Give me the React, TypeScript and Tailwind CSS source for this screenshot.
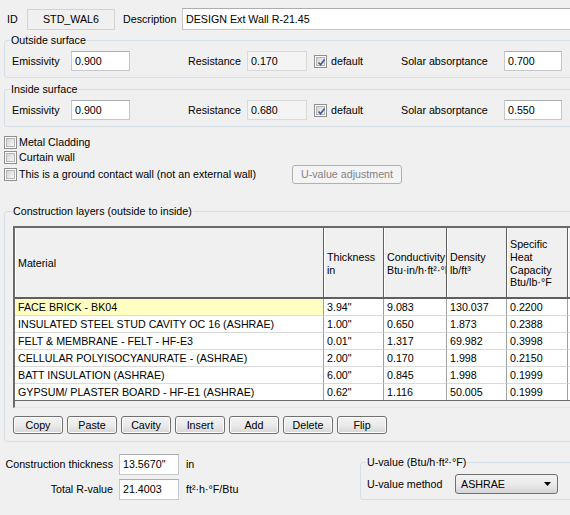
import React from "react";

const Check = ({ checked = false }: { checked?: boolean }) => (
  <div className="w-[13px] h-[13px] shrink-0 border border-[#8e8f8f] bg-white p-[1px]">
    <div className="w-full h-full bg-gradient-to-br from-[#d4d4d4] to-[#f7f7f7] border border-[#b5b5b5] relative">
      {checked && (
        <svg viewBox="0 0 9 9" className="absolute inset-0 w-[9px] h-[9px]">
          <path d="M1.5 4.5 L3.6 6.8 L7.6 1.6" fill="none" stroke="#3a57a0" strokeWidth="1.6" />
        </svg>
      )}
    </div>
  </div>
);

const Input = ({ w, children, disabled = false }: { w: string; children: React.ReactNode; disabled?: boolean }) => (
  <div
    className={
      "h-[20px] shrink-0 flex items-center pl-[3px] border whitespace-nowrap overflow-hidden " +
      w +
      (disabled ? " bg-[#f4f4f4] border-[#d9d9d9]" : " bg-white border-[#c6c8cd] border-t-[#abadb3]")
    }
  >
    {children}
  </div>
);

const Btn = ({ children }: { children: React.ReactNode }) => (
  <div className="w-[50px] h-[18px] shrink-0 flex items-center justify-center rounded-[3px] border border-[#707070] bg-gradient-to-b from-[#f2f2f2] via-[#ebebeb] to-[#d6d6d6] shadow-[inset_0_0_0_1px_#fcfcfc]">
    {children}
  </div>
);

const rows = [
  ["FACE BRICK - BK04", "3.94\"", "9.083", "130.037", "0.2200"],
  ["INSULATED STEEL STUD CAVITY OC 16 (ASHRAE)", "1.00\"", "0.650", "1.873", "0.2388"],
  ["FELT & MEMBRANE - FELT - HF-E3", "0.01\"", "1.317", "69.982", "0.3998"],
  ["CELLULAR POLYISOCYANURATE - (ASHRAE)", "2.00\"", "0.170", "1.998", "0.2150"],
  ["BATT INSULATION (ASHRAE)", "6.00\"", "0.845", "1.998", "0.1999"],
  ["GYPSUM/ PLASTER BOARD - HF-E1 (ASHRAE)", "0.62\"", "1.116", "50.005", "0.1999"],
];

const colW = ["w-[309px]", "w-[60px]", "w-[63px]", "w-[60px]", "w-[61px]", "w-[60px]"];

const SurfaceGroup = ({ title, res, solar, mt }: { title: string; res: string; solar: string; mt: string }) => (
  <fieldset className={"ml-[4px] w-[580px] shrink-0 border border-[#d5dfe5] rounded-[3px] pl-[7px] pb-[6px] " + mt}>
    <legend className="ml-[-2px] px-[1px] leading-[13px]">{title}</legend>
    <div className="flex items-center h-[20px] mt-[4px]">
      <span className="w-[59px] shrink-0">Emissivity</span>
      <Input w="w-[59px]">0.900</Input>
      <span className="ml-[58px] w-[59px] shrink-0">Resistance</span>
      <Input w="w-[60px]" disabled>
        {res}
      </Input>
      <div className="ml-[7px] shrink-0">
        <Check checked />
      </div>
      <span className="ml-[4px] w-[70px] shrink-0">default</span>
      <span className="w-[103px] shrink-0">Solar absorptance</span>
      <Input w="w-[58px]">{solar}</Input>
    </div>
  </fieldset>
);

export default function App() {
  return (
    <div className="w-[570px] h-[515px] overflow-hidden bg-[#f0f0f0] text-[10.7px] text-black font-['Liberation_Sans',Arial,sans-serif] flex flex-col">
      {/* top row */}
      <div className="flex items-center h-[22px] mt-[8px] shrink-0">
        <span className="pl-[7px] w-[27px] shrink-0">ID</span>
        <div className="w-[88px] h-[21px] shrink-0 flex items-center justify-center border border-[#d3d3d3] bg-[#f0f0f0]">
          STD_WAL6
        </div>
        <span className="ml-[8px] w-[59px] shrink-0">Description</span>
        <div className="w-[400px] h-[22px] shrink-0 flex items-center pl-[3px] bg-white border border-[#c6c8cd] border-t-[#abadb3]">
          DESIGN Ext Wall R-21.45
        </div>
      </div>

      <SurfaceGroup title="Outside surface" res="0.170" solar="0.700" mt="mt-[4px]" />
      <SurfaceGroup title="Inside surface" res="0.680" solar="0.550" mt="mt-[5px]" />

      {/* checkboxes */}
      <div className="flex flex-col mt-[8px] pl-[4px] shrink-0">
        <div className="flex items-center h-[15px]">
          <Check />
          <span className="ml-[2px]">Metal Cladding</span>
        </div>
        <div className="flex items-center h-[15px]">
          <Check />
          <span className="ml-[2px]">Curtain wall</span>
        </div>
        <div className="flex items-center h-[16px] mt-[1px]">
          <Check />
          <span className="ml-[2px] w-[273px] shrink-0">This is a ground contact wall (not an external wall)</span>
          <div className="w-[110px] h-[19px] shrink-0 flex items-center justify-center rounded-[3px] border border-[#adb2b5] bg-[#f4f4f4] text-[#838383]">
            U-value adjustment
          </div>
        </div>
      </div>

      {/* construction layers */}
      <fieldset className="ml-[4px] mt-[23px] w-[600px] shrink-0 border border-[#d5dfe5] rounded-[3px] pl-[8px] pb-[7px]">
        <legend className="ml-[-1px] px-[1px] leading-[13px]">Construction layers (outside to inside)</legend>
        <div className="mt-[8px] h-[182px] w-[640px] border-l-2 border-t-2 border-[#6a6a6a] border-b border-b-[#e3e3e3] bg-[#f0f0f0] flex flex-col">
          <div className="flex h-[71px] shrink-0 border-b-2 border-[#5f5f5f]">
            {[
              ["Material"],
              ["Thickness", "in"],
              ["Conductivity", "Btu·in/h·ft²·°F"],
              ["Density", "lb/ft³"],
              ["Specific", "Heat", "Capacity", "Btu/lb·°F"],
              [""],
            ].map((lines, i) => (
              <div
                key={i}
                className={
                  "shrink-0 h-full flex flex-col justify-center pl-[3px] pt-[2px] leading-[12.7px] overflow-hidden whitespace-nowrap border-r border-[#5f5f5f] shadow-[inset_1px_0_0_#ffffff] " +
                  colW[i]
                }
              >
                {lines.map((l, j) => (
                  <span key={j}>{l}</span>
                ))}
              </div>
            ))}
          </div>
          {rows.map((r, ri) => (
            <div
              key={ri}
              className={"flex h-[17px] shrink-0 " + (ri === rows.length - 1 ? "border-b border-[#6a6a6a]" : "")}
            >
              {[...r, ""].map((c, ci) => (
                <div
                  key={ci}
                  className={
                    "shrink-0 h-full flex items-center pl-[3px] whitespace-nowrap overflow-hidden border-r border-[#a0a0a0] " +
                    (ri === rows.length - 1 ? "" : "border-b border-b-[#dadada] ") +
                    (ri === 0 && ci === 0 ? "bg-[#ffffc4] " : "bg-white ") +
                    colW[ci]
                  }
                >
                  {c}
                </div>
              ))}
            </div>
          ))}
        </div>
        <div className="flex gap-[4px] mt-[8px]">
          <Btn>Copy</Btn>
          <Btn>Paste</Btn>
          <Btn>Cavity</Btn>
          <Btn>Insert</Btn>
          <Btn>Add</Btn>
          <Btn>Delete</Btn>
          <Btn>Flip</Btn>
        </div>
      </fieldset>

      {/* bottom */}
      <div className="flex shrink-0">
        <div className="w-[360px] shrink-0 flex flex-col gap-[4px] mt-[12px]">
          <div className="flex items-center h-[21px]">
            <span className="w-[114px] shrink-0 text-right pr-[1px]">Construction thickness</span>
            <div className="ml-[5px] w-[60px] h-[21px] shrink-0 flex items-center pl-[3px] bg-white border border-[#c6c8cd] border-t-[#abadb3]">
              13.5670"
            </div>
            <span className="ml-[7px]">in</span>
          </div>
          <div className="flex items-center h-[21px]">
            <span className="w-[114px] shrink-0 text-right pr-[1px]">Total R-value</span>
            <div className="ml-[5px] w-[60px] h-[21px] shrink-0 flex items-center pl-[3px] bg-white border border-[#c6c8cd] border-t-[#abadb3]">
              21.4003
            </div>
            <span className="ml-[7px]">ft²·h·°F/Btu</span>
          </div>
        </div>
        <fieldset className="mt-[14px] w-[230px] shrink-0 border border-[#d5dfe5] rounded-[3px] pl-[6px] pb-[5px]">
          <legend className="ml-[-1px] px-[1px] leading-[13px]">U-value (Btu/h·ft²·°F)</legend>
          <div className="flex items-center h-[20px] mt-[5px]">
            <span className="w-[88px] shrink-0">U-value method</span>
            <div className="w-[103px] h-[20px] shrink-0 flex items-center justify-between pl-[5px] pr-[6px] rounded-[3px] border border-[#707070] bg-gradient-to-b from-[#f2f2f2] via-[#ebebeb] to-[#d6d6d6]">
              <span>ASHRAE</span>
              <svg viewBox="0 0 7 4" className="w-[7px] h-[4px]">
                <path d="M0 0 H7 L3.5 4 Z" fill="#000" />
              </svg>
            </div>
          </div>
        </fieldset>
      </div>
    </div>
  );
}
